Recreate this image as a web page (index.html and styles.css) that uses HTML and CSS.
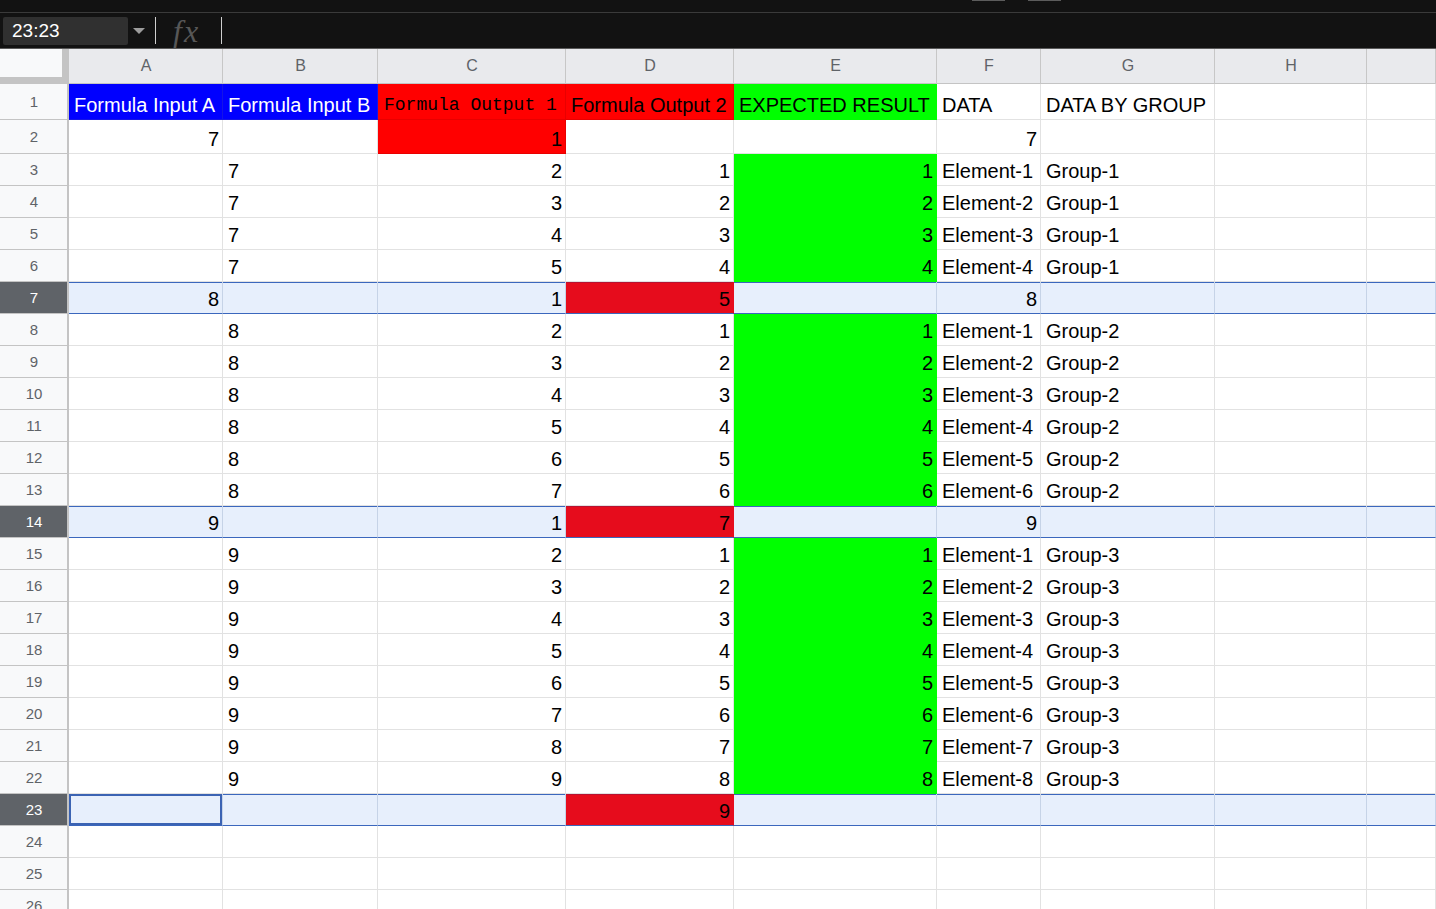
FILE: index.html
```html
<!DOCTYPE html>
<html>
<head>
<meta charset="utf-8">
<title>Sheet</title>
<link rel="stylesheet" href="styles.css">
</head>
<body>
<div class="top"><span class="mark"></span><span class="mark"></span></div>
<div class="fbar">
  <div class="namebox">23:23</div>
  <span class="caret"></span>
  <span class="vdiv"></span>
  <span class="fx">fx</span>
  <span class="vdiv"></span>
</div>
<div class="sheet">
  <div class="row hdr"><div class="corner"></div><div class="ch">A</div><div class="ch">B</div><div class="ch">C</div><div class="ch">D</div><div class="ch">E</div><div class="ch">F</div><div class="ch">G</div><div class="ch">H</div><div class="ch"></div></div>
  <div class="row r1"><div class="rh">1</div><div class="c bl">Formula Input A</div><div class="c bl">Formula Input B</div><div class="c rd mono">Formula Output 1</div><div class="c rd">Formula Output 2</div><div class="c gr">EXPECTED RESULT</div><div class="c">DATA</div><div class="c">DATA BY GROUP</div><div class="c"></div><div class="c"></div></div>
  <div class="row r2"><div class="rh">2</div><div class="c n">7</div><div class="c"></div><div class="c n rd">1</div><div class="c"></div><div class="c"></div><div class="c n">7</div><div class="c"></div><div class="c"></div><div class="c"></div></div>
  <div class="row"><div class="rh">3</div><div class="c"></div><div class="c">7</div><div class="c n">2</div><div class="c n">1</div><div class="c n gr">1</div><div class="c">Element-1</div><div class="c">Group-1</div><div class="c"></div><div class="c"></div></div>
  <div class="row"><div class="rh">4</div><div class="c"></div><div class="c">7</div><div class="c n">3</div><div class="c n">2</div><div class="c n gr">2</div><div class="c">Element-2</div><div class="c">Group-1</div><div class="c"></div><div class="c"></div></div>
  <div class="row"><div class="rh">5</div><div class="c"></div><div class="c">7</div><div class="c n">4</div><div class="c n">3</div><div class="c n gr">3</div><div class="c">Element-3</div><div class="c">Group-1</div><div class="c"></div><div class="c"></div></div>
  <div class="row"><div class="rh">6</div><div class="c"></div><div class="c">7</div><div class="c n">5</div><div class="c n">4</div><div class="c n gr">4</div><div class="c">Element-4</div><div class="c">Group-1</div><div class="c"></div><div class="c"></div></div>
  <div class="row sel"><div class="rh">7</div><div class="c n">8</div><div class="c"></div><div class="c n">1</div><div class="c n rds">5</div><div class="c"></div><div class="c n">8</div><div class="c"></div><div class="c"></div><div class="c"></div></div>
  <div class="row"><div class="rh">8</div><div class="c"></div><div class="c">8</div><div class="c n">2</div><div class="c n">1</div><div class="c n gr">1</div><div class="c">Element-1</div><div class="c">Group-2</div><div class="c"></div><div class="c"></div></div>
  <div class="row"><div class="rh">9</div><div class="c"></div><div class="c">8</div><div class="c n">3</div><div class="c n">2</div><div class="c n gr">2</div><div class="c">Element-2</div><div class="c">Group-2</div><div class="c"></div><div class="c"></div></div>
  <div class="row"><div class="rh">10</div><div class="c"></div><div class="c">8</div><div class="c n">4</div><div class="c n">3</div><div class="c n gr">3</div><div class="c">Element-3</div><div class="c">Group-2</div><div class="c"></div><div class="c"></div></div>
  <div class="row"><div class="rh">11</div><div class="c"></div><div class="c">8</div><div class="c n">5</div><div class="c n">4</div><div class="c n gr">4</div><div class="c">Element-4</div><div class="c">Group-2</div><div class="c"></div><div class="c"></div></div>
  <div class="row"><div class="rh">12</div><div class="c"></div><div class="c">8</div><div class="c n">6</div><div class="c n">5</div><div class="c n gr">5</div><div class="c">Element-5</div><div class="c">Group-2</div><div class="c"></div><div class="c"></div></div>
  <div class="row"><div class="rh">13</div><div class="c"></div><div class="c">8</div><div class="c n">7</div><div class="c n">6</div><div class="c n gr">6</div><div class="c">Element-6</div><div class="c">Group-2</div><div class="c"></div><div class="c"></div></div>
  <div class="row sel"><div class="rh">14</div><div class="c n">9</div><div class="c"></div><div class="c n">1</div><div class="c n rds">7</div><div class="c"></div><div class="c n">9</div><div class="c"></div><div class="c"></div><div class="c"></div></div>
  <div class="row"><div class="rh">15</div><div class="c"></div><div class="c">9</div><div class="c n">2</div><div class="c n">1</div><div class="c n gr">1</div><div class="c">Element-1</div><div class="c">Group-3</div><div class="c"></div><div class="c"></div></div>
  <div class="row"><div class="rh">16</div><div class="c"></div><div class="c">9</div><div class="c n">3</div><div class="c n">2</div><div class="c n gr">2</div><div class="c">Element-2</div><div class="c">Group-3</div><div class="c"></div><div class="c"></div></div>
  <div class="row"><div class="rh">17</div><div class="c"></div><div class="c">9</div><div class="c n">4</div><div class="c n">3</div><div class="c n gr">3</div><div class="c">Element-3</div><div class="c">Group-3</div><div class="c"></div><div class="c"></div></div>
  <div class="row"><div class="rh">18</div><div class="c"></div><div class="c">9</div><div class="c n">5</div><div class="c n">4</div><div class="c n gr">4</div><div class="c">Element-4</div><div class="c">Group-3</div><div class="c"></div><div class="c"></div></div>
  <div class="row"><div class="rh">19</div><div class="c"></div><div class="c">9</div><div class="c n">6</div><div class="c n">5</div><div class="c n gr">5</div><div class="c">Element-5</div><div class="c">Group-3</div><div class="c"></div><div class="c"></div></div>
  <div class="row"><div class="rh">20</div><div class="c"></div><div class="c">9</div><div class="c n">7</div><div class="c n">6</div><div class="c n gr">6</div><div class="c">Element-6</div><div class="c">Group-3</div><div class="c"></div><div class="c"></div></div>
  <div class="row"><div class="rh">21</div><div class="c"></div><div class="c">9</div><div class="c n">8</div><div class="c n">7</div><div class="c n gr">7</div><div class="c">Element-7</div><div class="c">Group-3</div><div class="c"></div><div class="c"></div></div>
  <div class="row"><div class="rh">22</div><div class="c"></div><div class="c">9</div><div class="c n">9</div><div class="c n">8</div><div class="c n gr">8</div><div class="c">Element-8</div><div class="c">Group-3</div><div class="c"></div><div class="c"></div></div>
  <div class="row sel"><div class="rh">23</div><div class="c act"></div><div class="c"></div><div class="c"></div><div class="c n rds">9</div><div class="c"></div><div class="c"></div><div class="c"></div><div class="c"></div><div class="c"></div></div>
  <div class="row"><div class="rh">24</div><div class="c"></div><div class="c"></div><div class="c"></div><div class="c"></div><div class="c"></div><div class="c"></div><div class="c"></div><div class="c"></div><div class="c"></div></div>
  <div class="row"><div class="rh">25</div><div class="c"></div><div class="c"></div><div class="c"></div><div class="c"></div><div class="c"></div><div class="c"></div><div class="c"></div><div class="c"></div><div class="c"></div></div>
  <div class="row"><div class="rh">26</div><div class="c"></div><div class="c"></div><div class="c"></div><div class="c"></div><div class="c"></div><div class="c"></div><div class="c"></div><div class="c"></div><div class="c"></div></div>
</div>
</body>
</html>
```
FILE: styles.css
```css
* { box-sizing: border-box; }
html, body { margin: 0; padding: 0; }
body {
  width: 1436px;
  height: 909px;
  overflow: hidden;
  background: #ffffff;
  font-family: "Liberation Sans", Arial, sans-serif;
}

.top {
  height: 13px;
  background: #121212;
  border-bottom: 1px solid #3a3a3a;
  display: flex;
  align-items: flex-start;
  gap: 23px;
  padding-left: 972px;
}
.mark {
  display: block;
  width: 33px;
  height: 1px;
  background: #5c5c5c;
}

.fbar {
  height: 36px;
  background: #121212;
  border-bottom: 1px solid #5a5a5a;
  display: flex;
  align-items: center;
}
.namebox {
  margin-left: 3px;
  width: 125px;
  height: 28px;
  background: #303030;
  border-radius: 2px;
  color: #ffffff;
  font-size: 19px;
  line-height: 28px;
  padding-left: 9px;
}
.caret {
  margin-left: 5px;
  width: 0;
  height: 0;
  border-left: 6px solid transparent;
  border-right: 6px solid transparent;
  border-top: 6px solid #9c9c9c;
}
.vdiv {
  width: 1px;
  height: 27px;
  background: #cfcfcf;
}
.caret + .vdiv { margin-left: 10px; }
.fx {
  margin-left: 17px;
  width: 48px;
  font-family: "Liberation Serif", "Times New Roman", serif;
  font-style: italic;
  font-size: 32px;
  line-height: 26px;
  letter-spacing: 2px;
  color: #575757;
}

.sheet { display: flex; flex-direction: column; }
.row {
  display: grid;
  grid-template-columns: 69px 154px 155px 188px 168px 203px 104px 174px 152px 1fr;
  height: 32px;
  flex: none;
}
.row.hdr { height: 35px; }
.row.r1 { height: 36px; }
.row.r2 { height: 34px; }

.corner {
  background: #f8f9fa;
  border-right: 7px solid #c4c4c4;
  border-bottom: 7px solid #c4c4c4;
}
.ch {
  background: #e9eaed;
  border-right: 1px solid #c7c7c7;
  border-bottom: 1px solid #c4c4c4;
  color: #5f6368;
  font-size: 16px;
  padding-left: 1px;
  display: flex;
  align-items: center;
  justify-content: center;
}
.rh {
  background: #f8f9fa;
  border-right: 2px solid #c4c4c4;
  border-bottom: 1px solid #c4c4c4;
  color: #5f6368;
  font-size: 15px;
  padding-left: 1px;
  display: flex;
  align-items: center;
  justify-content: center;
}
.c {
  border-right: 1px solid #e2e2e2;
  border-bottom: 1px solid #e2e2e2;
  display: flex;
  align-items: flex-end;
  padding: 0 3px 2px 5px;
  font-size: 20px;
  line-height: 24px;
  color: #000000;
  white-space: nowrap;
  overflow: hidden;
}
.c.n { justify-content: flex-end; }

.c.bl { background: #0000ff; color: #ffffff; border-color: #1414e6; }
.c.rd { background: #ff0000; border-color: #e80000; }
.c.gr { background: #00ff00; border-color: #00ff00; }
.c.mono {
  font-family: "Liberation Mono", "DejaVu Sans Mono", monospace;
  font-size: 18px;
  padding-left: 6px;
}

.sel .rh { background: #5f6368; color: #ffffff; }
.sel .c {
  background: #e7effc;
  border-right-color: #c6d3e7;
  border-bottom-color: #3b67bd;
  box-shadow: inset 0 1px 0 #3b67bd;
}
.sel .c.rds {
  background: #e60c1c;
  border-right-color: #e60c1c;
  box-shadow: inset 0 1px 0 #b81230;
}
.sel .c.act {
  box-shadow: inset 0 0 0 2px #3b63b3;
}
```
